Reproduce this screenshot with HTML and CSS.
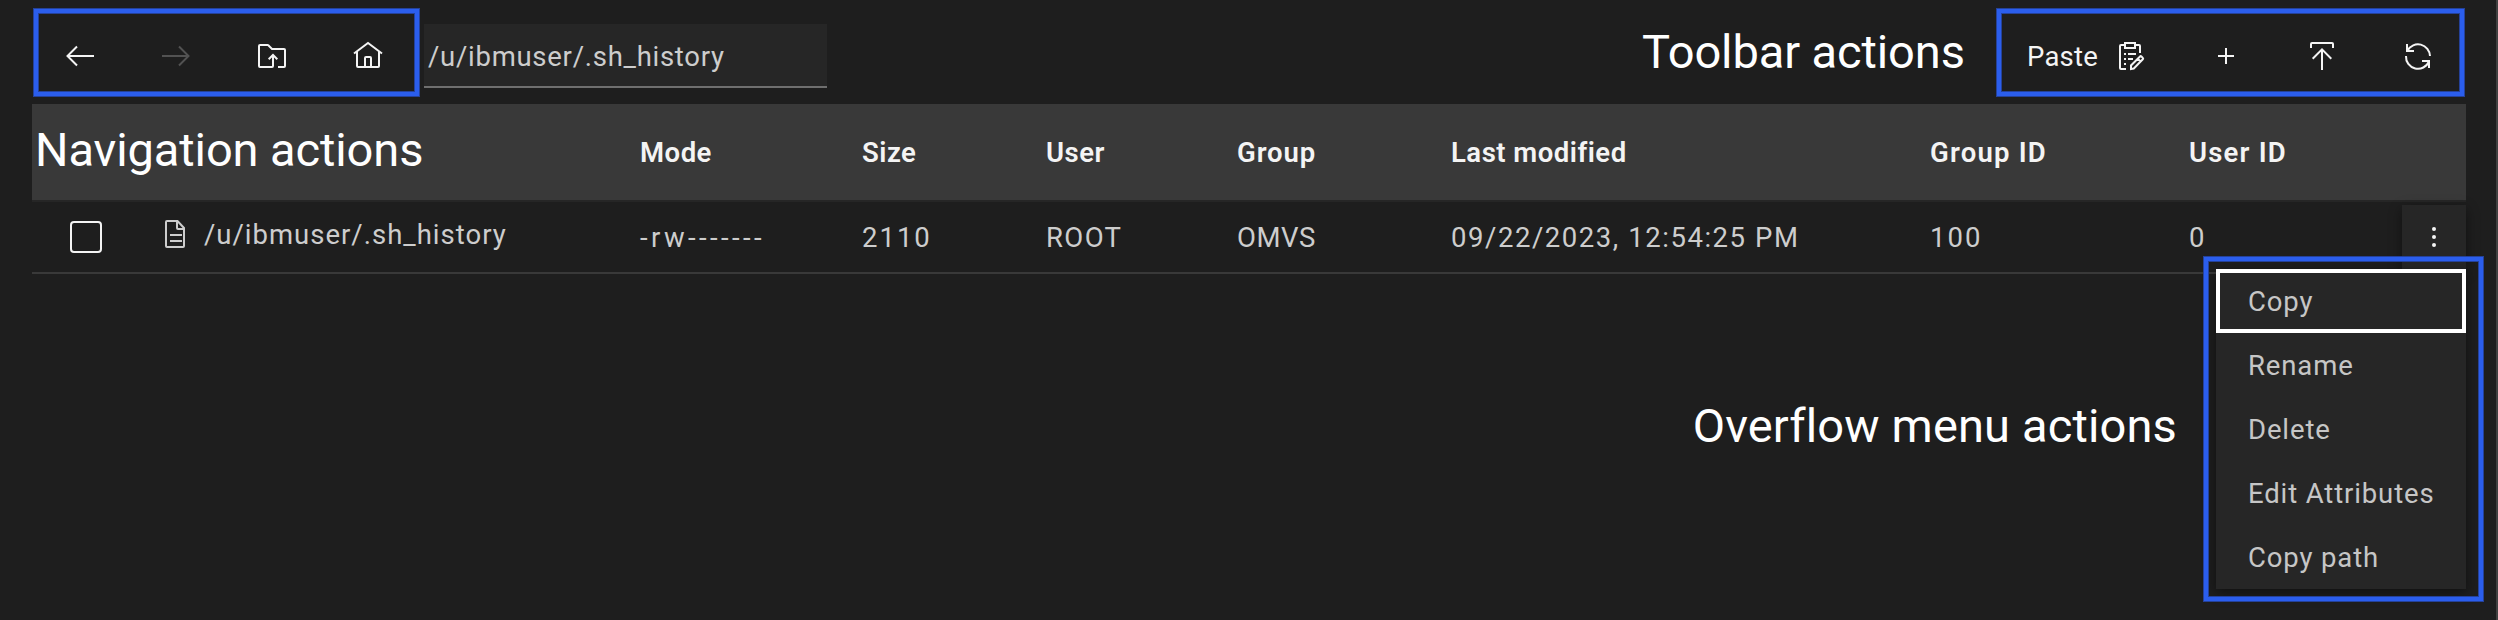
FILE: index.html
```html
<!DOCTYPE html>
<html lang="en">
<head>
<meta charset="utf-8">
<title>Files</title>
<link rel="stylesheet" href="styles.css">
</head>
<body>
<main class="app">
  <header class="toolbar">
    <nav class="group group-nav">
      <button class="btn"><svg viewBox="0 0 32 32"><path d="M30 16H3.500M13 6.500L3.500 16l9.500 9.500"/></svg></button>
      <button class="btn btn-off"><svg viewBox="0 0 32 32"><path d="M2 16h26.500M19 6.500l9.500 9.500-9.500 9.500"/></svg></button>
      <button class="btn"><svg viewBox="0 0 32 32"><path d="M22 27h6a1 1 0 0 0 1-1V10a1 1 0 0 0-1-1H16l-3.700-3.700a1 1 0 0 0-.7-.3H4a1 1 0 0 0-1 1v20a1 1 0 0 0 1 1h12a1 1 0 0 0 1-1V15M12.700 19.300L17 15l4.300 4.300"/></svg></button>
      <button class="btn"><svg viewBox="0 0 32 32"><path d="M2 13.500L16 3l14 10.500M5 11.500V26a1 1 0 0 0 1 1h20a1 1 0 0 0 1-1V11.500M13 27V18a1 1 0 0 1 1-1h4a1 1 0 0 1 1 1v9"/></svg></button>
    </nav>
    <div class="path-input">/u/ibmuser/.sh_history</div>
    <span class="note note-toolbar">Toolbar actions</span>
    <div class="group group-actions">
      <button class="paste"><span>Paste</span><svg viewBox="0 0 32 32"><path d="M11 5H7a1 1 0 0 0-1 1v22a1 1 0 0 0 1 1h5M21 5h4a1 1 0 0 1 1 1v7M11 3h10v5H11zM10 14h2M14 14h8M10 19h2M14 19h5M10 24h2M17 29v-3.500l9-9a1 1 0 0 1 1.400 0l1.400 1.400a1 1 0 0 1 0 1.400l-9 9.200zM23.500 18.500l3.500 3.500"/></svg></button>
      <button class="btn"><svg viewBox="0 0 32 32"><path d="M8 16h16M16 8v16"/></svg></button>
      <button class="btn"><svg viewBox="0 0 32 32"><path d="M5 8V4a1 1 0 0 1 1-1h20a1 1 0 0 1 1 1v4M16 30V9.500M6.700 18.700L16 9.400l9.300 9.300"/></svg></button>
      <button class="btn"><svg viewBox="0 0 32 32"><path d="M5 4v7h7M5.500 10.500A12 12 0 0 1 28 16M27 28v-7h-7M27 21.500A12 12 0 0 1 4 16"/></svg></button>
    </div>
  </header>
  <section class="table">
    <div class="row head">
      <span class="note note-nav">Navigation actions</span>
      <span>Mode</span><span>Size</span><span>User</span><span class="th-group">Group</span><span>Last modified</span><span class="th-id">Group ID</span><span class="th-id">User ID</span>
    </div>
    <div class="row item">
      <div class="name"><i class="check"></i><svg viewBox="0 0 32 32"><path d="M8 3h10.500l6.500 7v18a1 1 0 0 1-1 1H8a1 1 0 0 1-1-1V4a1 1 0 0 1 1-1zM18 3v7a1 1 0 0 0 1 1h6M11 17h12M11 23h12"/></svg><span>/u/ibmuser/.sh_history</span></div>
      <span class="mode">-rw-------</span><span class="num">2110</span><span class="user">ROOT</span><span>OMVS</span><span class="date">09/22/2023, 12:54:25 PM</span><span class="num">100</span><span class="num">0</span>
      <button class="more"><svg viewBox="0 0 32 32"><circle cx="16" cy="8" r="2"/><circle cx="16" cy="16" r="2"/><circle cx="16" cy="24" r="2"/></svg></button>
    </div>
  </section>
  <section class="lower">
    <span class="note note-menu">Overflow menu actions</span>
  </section>
  <ul class="menu">
    <li class="focus">Copy</li>
    <li>Rename</li>
    <li>Delete</li>
    <li>Edit Attributes</li>
    <li>Copy path</li>
  </ul>
  <div class="frame"></div>
</main>
</body>
</html>
```
FILE: styles.css
```css
* { box-sizing: border-box; }
body { margin: 0; background: #1e1e1e; }
.app {
  position: relative;
  width: 2498px;
  height: 620px;
  padding: 8px 30px 0 32px;
  border-right: 2px solid #414141;
  background: #1e1e1e;
  color: #cdcdcd;
  font: 400 27.5px/36px Roboto, sans-serif;
  letter-spacing: 0.5px;
  overflow: hidden;
}
button { padding: 0; border: 0; background: none; color: #f4f4f4; font: inherit; letter-spacing: inherit; }
svg { display: block; width: 32px; height: 32px; fill: none; stroke: currentColor; stroke-width: 2; }
span { white-space: nowrap; }
.toolbar { display: flex; height: 96px; }
.group, .frame {
  border: 4px solid #2b5eed;
  box-shadow: 0 0 0 1px #25429a, inset 0 0 0 1px #25429a;
}
.group { display: flex; height: 87px; margin-top: 1px; }
.group-nav { width: 385px; margin-left: 2px; }
.btn { width: 96px; height: 86px; display: grid; place-items: center; flex: none; }
.group-nav .btn:first-child { margin-left: -6px; }
.btn-off { color: #525252; }
.path-input { width: 403px; height: 64px; margin: 16px 0 0 5px; padding: 15px 0 0 4px; background: #262626; border-bottom: 2px solid #6f6f6f; letter-spacing: 0.73px; }
.note { color: #fff; font-size: 47px; line-height: 60px; letter-spacing: -0.1px; }
.note-toolbar { margin: 14px 0 0 815px; }
.group-actions { position: absolute; left: 1997px; width: 467px; }
.paste { display: flex; align-items: center; justify-content: space-between; width: 177px; height: 86px; padding: 0 32px 0 26px; flex: none; letter-spacing: 0.2px; }
.paste span { margin-top: 2px; }
.table { width: 2434px; }
.row { display: grid; grid-template-columns: 608px 222px 184px 191px 214px 479px 259px auto; align-items: center; }
.row > span { margin-top: 2px; }
.head { height: 98px; background: #393939; border-bottom: 2px solid #262626; color: #f4f4f4; font-weight: 600; }
.head .note { font-weight: 400; padding-left: 3px; margin-top: -4px; }
.th-group { letter-spacing: 0.9px; }
.th-id { letter-spacing: 1.2px; }
.item { position: relative; height: 72px; border-bottom: 2px solid #393939; }
.mode { letter-spacing: 3.4px; }
.num { letter-spacing: 2px; }
.user { letter-spacing: 1.4px; }
.date { letter-spacing: 1.55px; }
.name { display: flex; align-items: center; }
.check { width: 32px; height: 32px; margin: 0 57px 0 38px; border: 2px solid #f4f4f4; border-radius: 4px; }
.name svg { margin: -6px 13px 0 0; }
.name span { margin-top: -5px; letter-spacing: 1px; }
.more { position: absolute; right: 0; top: 3px; width: 64px; height: 64px; display: grid; place-items: center; background: #262626; box-shadow: 0 4px 12px rgba(0,0,0,.45); }
.more svg { fill: currentColor; stroke: none; }
.lower { display: flex; justify-content: flex-end; padding: 122px 289px 0 0; }
.note-menu { letter-spacing: 0.15px; }
.menu { position: absolute; left: 2216px; top: 269px; width: 250px; height: 320px; margin: 0; padding: 0; list-style: none; background: #262626; color: #c6c6c6; letter-spacing: 0.87px; box-shadow: 0 4px 12px rgba(0,0,0,.45); }
.menu li { height: 64px; padding: 15px 0 0 32px; white-space: nowrap; }
.menu .focus { border: 4px solid #fff; padding: 11px 0 0 28px; }
.frame { position: absolute; left: 2204px; top: 257px; width: 279px; height: 344px; }
```
